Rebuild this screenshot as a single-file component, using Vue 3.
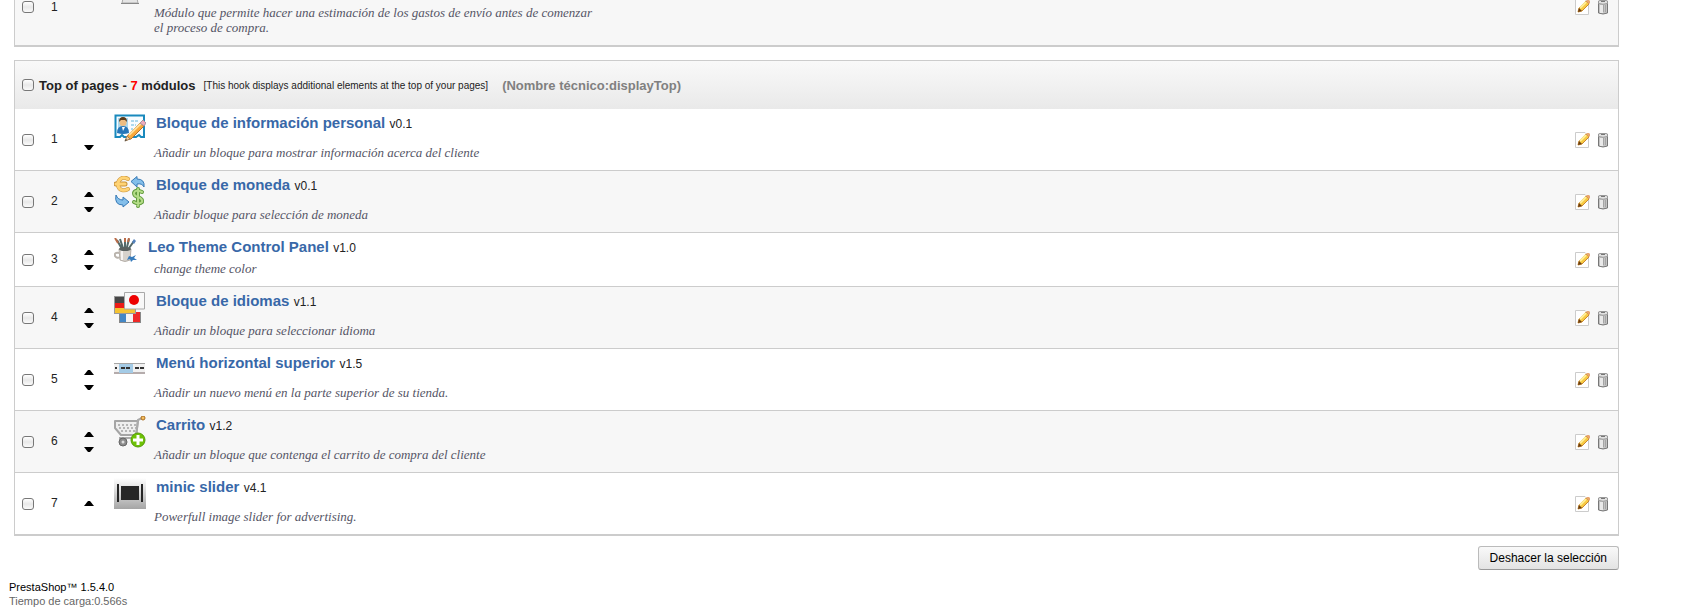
<template>
    <div class="page">
        <form class="hooks" @submit.prevent>
            <table v-for="hook in hooks" :key="hook.id" class="hook">
                <colgroup>
                    <col class="col-check">
                    <col class="col-position">
                    <col class="col-move">
                    <col>
                    <col class="col-actions">
                </colgroup>
                <thead v-if="hook.title">
                    <tr>
                        <th colspan="5">
                            <div class="hook-title">
                                <input :id="hook.id" v-model="hook.checked" type="checkbox" @change="toggleAll(hook)">
                                <label :for="hook.id">
                                    {{ hook.title }} - <span class="count">{{ hook.modules.length }}</span> módulos
                                </label>
                                <span class="hint">[{{ hook.hint }}]</span>
                                <span class="technical">(Nombre técnico:{{ hook.name }})</span>
                            </div>
                        </th>
                    </tr>
                </thead>
                <tbody>
                    <tr v-for="(mod, index) in hook.modules" :key="mod.icon" :class="{ alt: mod.alt }">
                        <td class="check">
                            <input v-model="mod.checked" type="checkbox" :aria-label="'Módulo ' + (index + 1)">
                        </td>
                        <td>{{ index + 1 }}</td>
                        <td class="move">
                            <div class="arrows">
                                <span v-if="index === 0" class="slot"></span>
                                <a v-else href="#" class="slot" aria-label="Subir" @click.prevent="move(hook, index, -1)">
                                    <svg width="10" height="5" viewBox="0 0 10 5"><path d="M0 5L4 0H6L10 5Z" /></svg>
                                </a>
                                <a v-if="index < hook.modules.length - 1" href="#" class="slot" aria-label="Bajar" @click.prevent="move(hook, index, 1)">
                                    <svg width="10" height="5" viewBox="0 0 10 5"><path d="M0 0H10L6 5H4Z" /></svg>
                                </a>
                            </div>
                        </td>
                        <td class="info">
                            <div class="module-head">
                                <svg v-if="mod.icon === 'shipping'" width="32" height="32" viewBox="0 0 32 32">
                                    <path d="M10 20H22L24 29H8Z" fill="#e5e5e5" stroke="#aaa" />
                                    <path d="M7 29.500H25" stroke="#888" />
                                </svg>
                                <svg v-else-if="mod.icon === 'userinfo'" width="32" height="32" viewBox="0 0 32 32">
                                    <path d="M1.500 1.500H30V23H27L25 21L22 23H10L8 21L6 23H1.500Z" fill="#f7fcff" stroke="#1989bd" stroke-width="2" />
                                    <path d="M4 4H14V19H4Z" fill="#a9d6ed" />
                                    <path d="M3 19Q3 12 9 12Q15 12 15 19Q9 21 3 19Z" fill="#2676b9" />
                                    <path d="M8 13L9 17L11 13Z" fill="#fff" />
                                    <circle cx="9" cy="8.500" r="3.500" fill="#edbd82" />
                                    <path d="M5 8Q5 3 9 3Q13 3 13 8L11 6H7Z" fill="#5c3b18" />
                                    <path d="M17 7H25M17 11H22M17 15H19" stroke="#64b6da" stroke-dasharray="3 1" />
                                    <path d="M12 26L14 21L26 9L30 12L17 25Z" fill="#f9aa3c" stroke="#b0702f" />
                                    <path d="M15 21L27 9.500" stroke="#ffe09b" stroke-width="2" />
                                    <path d="M26 9L29 6L32 9L30 12Z" fill="#eeaabb" stroke="#aa92a0" />
                                    <path d="M11 27L13 22L16 25Z" fill="#f2d1a0" stroke="#a5825b" />
                                    <path d="M10.500 27.500L12 25L13 26Z" fill="#444" />
                                </svg>
                                <svg v-else-if="mod.icon === 'currencies'" width="32" height="32" viewBox="0 0 32 32">
                                    <g fill="none" stroke-linecap="round" stroke-linejoin="round">
                                        <path d="M14 3Q11 1 8 2Q4 4 4 8Q4 13 8 14Q11 15 14 13" stroke="#c8923a" stroke-width="4" />
                                        <path d="M2 8H11" stroke="#c8923a" stroke-width="5" />
                                        <path d="M14 3Q11 1 8 2Q4 4 4 8Q4 13 8 14Q11 15 14 13" stroke="#ffd374" stroke-width="3" />
                                        <path d="M2 8H11" stroke="#ffd374" stroke-width="3" />
                                        <path d="M28 16Q21 13 20 17Q20 20 24 21Q29 23 28 26Q25 29 20 26M24 13V30" stroke="#619b3c" stroke-width="4" />
                                        <path d="M28 16Q21 13 20 17Q20 20 24 21Q29 23 28 26Q25 29 20 26M24 13V30" stroke="#b4dc87" stroke-width="2" />
                                    </g>
                                    <path d="M17 5.500L23 .5V3Q31 3 30 11Q28 7 23 8V11Z" fill="#84bfea" stroke="#3679b6" />
                                    <path d="M15 26L9 21V24Q4 24 2 19Q0 29 9 29V31Z" fill="#84bfea" stroke="#3679b6" />
                                </svg>
                                <svg v-else-if="mod.icon === 'theme'" width="24" height="24" viewBox="0 0 24 24">
                                    <path d="M3 2L9 13M6 1L10 13M11 1V12M15 1L12 13M20 3L13 13" fill="none" stroke="#536969" stroke-width="2" />
                                    <path d="M1 0L4 5M11 0V4M15 0L14 4" stroke="#b96c49" stroke-width="2" />
                                    <path d="M18 4L20 1L22 3L20 6Z" fill="#5380bb" />
                                    <path d="M5 11H17L16 22Q11 25 6 22Z" fill="#d6d2cc" stroke="#b5afa8" />
                                    <path d="M8 13V22" stroke="#f6f4f2" stroke-width="2" />
                                    <path d="M5 15Q0 14 1 18Q3 21 6 19" fill="none" stroke="#b9b3ac" stroke-width="2" />
                                    <path d="M15 18L18 19L22 17L20 20L23 22L19 22L17 24L16 21L13 22Z" fill="#377bbb" />
                                    <ellipse cx="11" cy="11" rx="6" ry="2" fill="#596160" />
                                </svg>
                                <svg v-else-if="mod.icon === 'languages'" width="32" height="32" viewBox="0 0 32 32">
                                    <path d="M5 20H27V31H5Z" fill="#888" />
                                    <path d="M6 20H12V30H6Z" fill="#4387c5" />
                                    <path d="M12 20H19V30H12Z" fill="#f4f4f4" />
                                    <path d="M19 20H26V30H19Z" fill="#ee2927" />
                                    <path d="M0 4H22V22H0Z" fill="#999" />
                                    <path d="M1 5H21V11H1Z" fill="#474747" />
                                    <path d="M1 11H21V16H1Z" fill="#ec1c17" />
                                    <path d="M1 16H21V21H1Z" fill="#f5c331" />
                                    <path d="M10.500 .5H30.500V17H10.500Z" fill="#f8f8f8" stroke="#a8a8a8" />
                                    <circle cx="20" cy="8" r="5" fill="#ed0000" />
                                </svg>
                                <svg v-else-if="mod.icon === 'topmenu'" width="32" height="32" viewBox="0 0 32 32">
                                    <path d="M0 9H31V20H0Z" fill="#f1f1f1" />
                                    <path d="M0 9.500H31" stroke="#a5a5a5" />
                                    <path d="M0 19H31" stroke="#b5acac" stroke-width="2" />
                                    <path d="M5 10H19V19H5Z" fill="#a4cbe6" />
                                    <path d="M1 14H3M7 14H17M21 14H30" stroke="#333" stroke-width="2" stroke-dasharray="4 1" />
                                </svg>
                                <svg v-else-if="mod.icon === 'cart'" width="32" height="32" viewBox="0 0 32 32">
                                    <path d="M1 5H24L22 19H7L1 12Z" fill="#eee" stroke="#a5a5a5" stroke-width="2" stroke-linejoin="round" />
                                    <path d="M4 9H22M5 12H22M7 15H21" stroke="#b5b5b5" stroke-width="2" stroke-dasharray="2 2" />
                                    <path d="M22 22L24 4L28 2M5 22H21" fill="none" stroke="#aaa" stroke-width="2" />
                                    <circle cx="29" cy="2" r="2" fill="#f5bf61" stroke="#a96c1e" />
                                    <circle cx="9" cy="26" r="4" fill="#8b8b8b" stroke="#666" />
                                    <circle cx="9" cy="26" r="1.500" fill="#ddd" />
                                    <circle cx="24" cy="24" r="7" fill="#6ec205" stroke="#559b0b" />
                                    <path d="M24 19V29M19 24H29" stroke="#fff" stroke-width="3" />
                                </svg>
                                <svg v-else width="32" height="32" viewBox="0 0 32 32">
                                    <defs>
                                        <linearGradient id="slider-bg" x1="0" y1="0" x2="0" y2="1">
                                            <stop offset="0" stop-color="#fff" />
                                            <stop offset="1" stop-color="#a5a5a5" />
                                        </linearGradient>
                                    </defs>
                                    <path d="M0 0H32V31H0Z" fill="url(#slider-bg)" />
                                    <path d="M3 6H5V24H3ZM27 6H29V24H27ZM7 8H25V22H7Z" fill="#262626" />
                                </svg>
                                <div v-if="mod.title" class="module-title">
                                    <strong>{{ mod.title }}</strong> {{ mod.version }}
                                </div>
                            </div>
                            <p class="description">{{ mod.description }}</p>
                        </td>
                        <td>
                            <div class="actions">
                                <a href="#" aria-label="Editar" @click.prevent>
                                    <svg width="16" height="16" viewBox="0 0 16 16">
                                        <path d="M.5 .5H10L13.500 4V15.500H.5Z" fill="#fff" stroke="#ccc" />
                                        <path d="M3 13L4 9L11 2L14 5L7 12Z" fill="#f8ca43" stroke="#c98932" />
                                        <path d="M5 9L11 3" stroke="#fff09a" stroke-width="2" />
                                        <path d="M11 2L12 1H14L15 2V4L14 5Z" fill="#e7a66f" />
                                        <path d="M3 13L4 9L7 12Z" fill="#6a3c10" />
                                    </svg>
                                </a>
                                <a href="#" aria-label="Eliminar" @click.prevent>
                                    <svg width="16" height="16" viewBox="0 0 16 16">
                                        <path d="M3.500 3V14Q8 16 12.500 14V3Z" fill="#c4c4c4" stroke="#777" />
                                        <path d="M5 6H8V14H5Z" fill="#e9e9e9" />
                                        <path d="M8.500 6V13M10.500 6V13" stroke="#a5a5a5" />
                                        <path d="M3.500 2L5 1.500H11L12.500 2V4.500Q8 6 3.500 4.500Z" fill="#e1e1e1" stroke="#999" />
                                        <path d="M6 2.500H10" stroke="#777" />
                                    </svg>
                                </a>
                            </div>
                        </td>
                    </tr>
                </tbody>
            </table>
            <div class="submit-row">
                <button type="button" class="button" @click="clearSelection">Deshacer la selección</button>
            </div>
        </form>
        <footer class="footer">
            <a href="#" @click.prevent>PrestaShop™ 1.5.4.0</a>
            <span>Tiempo de carga:0.566s</span>
        </footer>
    </div>
</template>

<script setup>
import { reactive } from 'vue'

const hooks = reactive([
    {
        id: 'cart-hook',
        modules: [
            {
                icon: 'shipping',
                alt: true,
                checked: false,
                description: 'Módulo que permite hacer una estimación de los gastos de envío antes de comenzar el proceso de compra.'
            }
        ]
    },
    {
        id: 'top-hook',
        title: 'Top of pages',
        hint: 'This hook displays additional elements at the top of your pages',
        name: 'displayTop',
        checked: false,
        modules: [
            { icon: 'userinfo', title: 'Bloque de información personal', version: 'v0.1', description: 'Añadir un bloque para mostrar información acerca del cliente', checked: false },
            { icon: 'currencies', title: 'Bloque de moneda', version: 'v0.1', description: 'Añadir bloque para selección de moneda', alt: true, checked: false },
            { icon: 'theme', title: 'Leo Theme Control Panel', version: 'v1.0', description: 'change theme color', checked: false },
            { icon: 'languages', title: 'Bloque de idiomas', version: 'v1.1', description: 'Añadir un bloque para seleccionar idioma', alt: true, checked: false },
            { icon: 'topmenu', title: 'Menú horizontal superior', version: 'v1.5', description: 'Añadir un nuevo menú en la parte superior de su tienda.', checked: false },
            { icon: 'cart', title: 'Carrito', version: 'v1.2', description: 'Añadir un bloque que contenga el carrito de compra del cliente', alt: true, checked: false },
            { icon: 'slider', title: 'minic slider', version: 'v4.1', description: 'Powerfull image slider for advertising.', checked: false }
        ]
    }
])

const toggleAll = (hook) => {
    hook.modules.forEach((mod) => {
        mod.checked = hook.checked
    })
}

const move = (hook, index, step) => {
    const [mod] = hook.modules.splice(index, 1)
    hook.modules.splice(index + step, 0, mod)
}

const clearSelection = () => {
    hooks.forEach((hook) => {
        hook.checked = false
        toggleAll(hook)
    })
}
</script>

<style>
body {
    margin: 0;
    background: #fff;
}
</style>

<style scoped>
.page {
    overflow: hidden;
    font-family: Arial, "Liberation Sans", sans-serif;
    font-size: 12px;
    line-height: 15px;
    color: #222;
}

/* the list is scrolled, the first row starts above the window */
.hooks {
    margin: -32px 80px 0 14px;
}

.hook {
    width: 100%;
    margin-bottom: 13px;
    table-layout: fixed;
    border: 1px solid #ccc;
    border-bottom-width: 2px;
    border-spacing: 0;
}

.col-check {
    width: 36px;
}

.col-position {
    width: 29px;
}

.col-move {
    width: 34px;
}

.col-actions {
    width: 43px;
}

th,
td {
    padding: 0;
    text-align: left;
    font-weight: normal;
}

th {
    height: 48px;
    background: linear-gradient(#f9f9f9, #e9e9e9);
}

.hook-title {
    display: flex;
    align-items: center;
    padding-left: 7px;
    font-size: 13px;
}

.hook-title label {
    margin: 0 8px 0 5px;
    font-weight: bold;
}

.count {
    color: #f00;
}

.hint {
    margin-right: 14px;
    font-size: 10px;
}

.technical {
    font-weight: bold;
    color: #808080;
}

td {
    border-bottom: 1px solid #ccc;
}

tr:last-child td {
    border-bottom: 0;
}

.alt td {
    background: #f7f7f7;
}

.check {
    padding-left: 7px;
}

input[type="checkbox"] {
    display: block;
    width: 12px;
    height: 12px;
    margin: 0;
    appearance: none;
    border: 1px solid #777;
    border-radius: 3px;
    background: linear-gradient(#fff, #e8e8e8 50%, #fafafa);
}

input[type="checkbox"]:checked {
    background: #6b9bd2;
}

.arrows {
    display: flex;
    flex-direction: column;
    width: 18px;
}

.slot {
    display: flex;
    align-items: center;
    justify-content: center;
    height: 15px;
}

.info {
    padding: 5px 0 10px;
}

.module-head {
    display: flex;
    align-items: flex-start;
    gap: 10px;
}

.module-title {
    line-height: 18px;
}

.module-title strong {
    margin-right: 1px;
    font-size: 15px;
    color: #3868a8;
}

.description {
    max-width: 450px;
    margin: -1px 0 0 40px;
    font-family: Georgia, "Liberation Serif", serif;
    font-size: 13px;
    font-style: italic;
    color: #555566;
}

.actions {
    display: flex;
    gap: 4px;
}

.actions svg {
    display: block;
}

.submit-row {
    display: flex;
    justify-content: flex-end;
    margin-top: -3px;
}

.button {
    height: 24px;
    padding: 0 11px;
    border: 1px solid #bbb;
    border-bottom-color: #999;
    border-radius: 3px;
    background: linear-gradient(#f9f9f9, #e3e3e3);
    font-family: inherit;
    font-size: 12px;
    color: #000;
}

.footer {
    display: flex;
    flex-direction: column;
    align-items: flex-start;
    padding: 10px 9px 0;
    font-size: 11px;
    line-height: 14px;
    color: #666;
}

.footer a {
    color: #000;
    text-decoration: none;
}
</style>
